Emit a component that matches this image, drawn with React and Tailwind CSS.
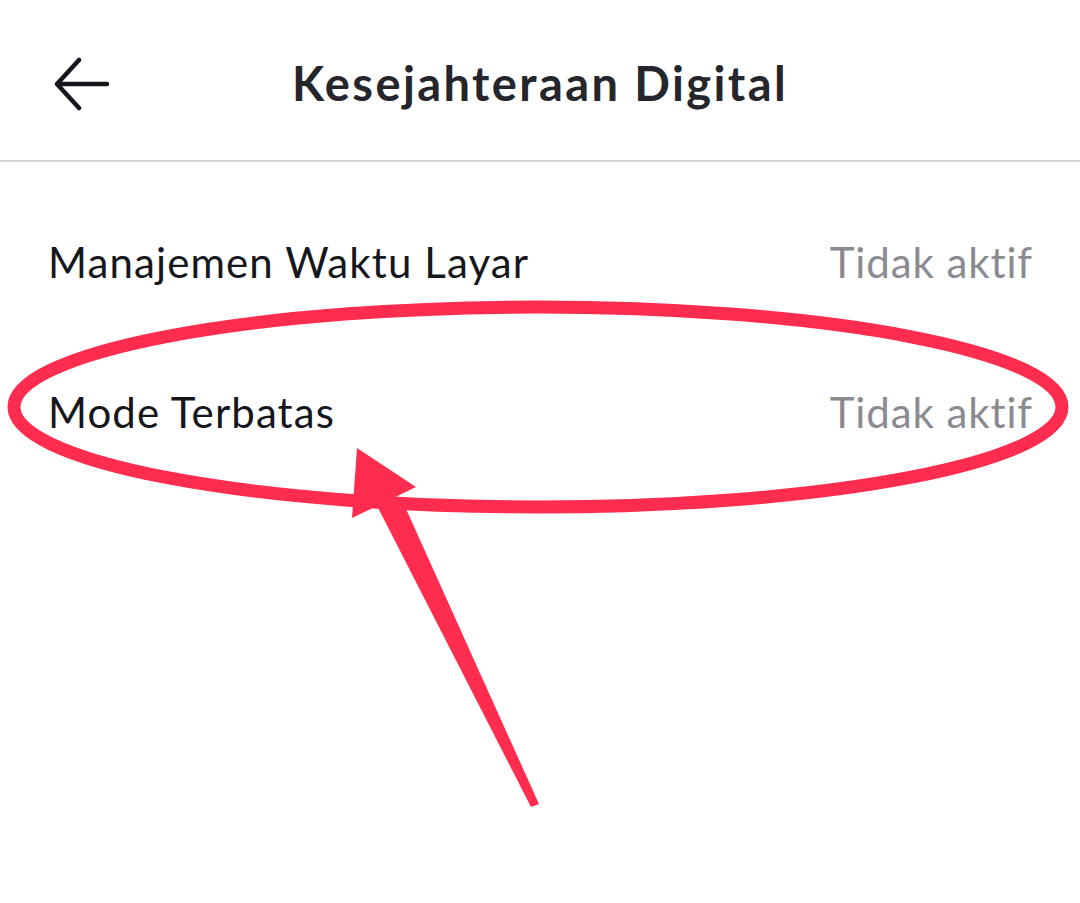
import React from 'react';

const rows = [
  { label: 'Manajemen Waktu Layar', value: 'Tidak aktif' },
  { label: 'Mode Terbatas', value: 'Tidak aktif' },
];

function BackArrow() {
  return (
    <svg width="56" height="56" viewBox="0 0 56 56" fill="none">
      <path d="M26 4 L4 28 L26 52 M4 28 H54" stroke="#16171c" strokeWidth="4.5" strokeLinecap="round" strokeLinejoin="round" />
    </svg>
  );
}

export default function App() {
  return (
    <div className="relative w-[1080px] h-[903px] bg-white overflow-hidden" style={{ fontFamily: 'Lato, "Open Sans", sans-serif' }}>
      {/* Header */}
      <div className="relative h-[162px] flex items-center justify-center border-b-2 border-[#d3d3d3]">
        <button className="absolute left-[53px] top-[56px]">
          <BackArrow />
        </button>
        <h1 className="text-[47px] font-bold text-[#25262b] tracking-[2.4px] mt-[6px]">Kesejahteraan Digital</h1>
      </div>

      {/* Rows */}
      <div className="pt-[25px]">
        {rows.map((r) => (
          <div key={r.label} className="h-[150px] flex items-center justify-between pl-[48px] pr-[47px]">
            <span className="text-[42px] text-[#16171c] tracking-[1.1px]">{r.label}</span>
            <span className="text-[42px] text-[#8a8b91] tracking-[0.9px]">{r.value}</span>
          </div>
        ))}
      </div>

      {/* Annotation overlay */}
      <svg className="absolute inset-0 pointer-events-none" width="1080" height="903" viewBox="0 0 1080 903">
        <ellipse cx="538" cy="407" rx="524" ry="100" fill="none" stroke="#fe2c4f" strokeWidth="13" />
        <polygon points="357,448 416,487 352,518" fill="#fe2c4f" />
        <polygon points="372,496 402,500 539,804 531,807" fill="#fe2c4f" />
      </svg>
    </div>
  );
}
